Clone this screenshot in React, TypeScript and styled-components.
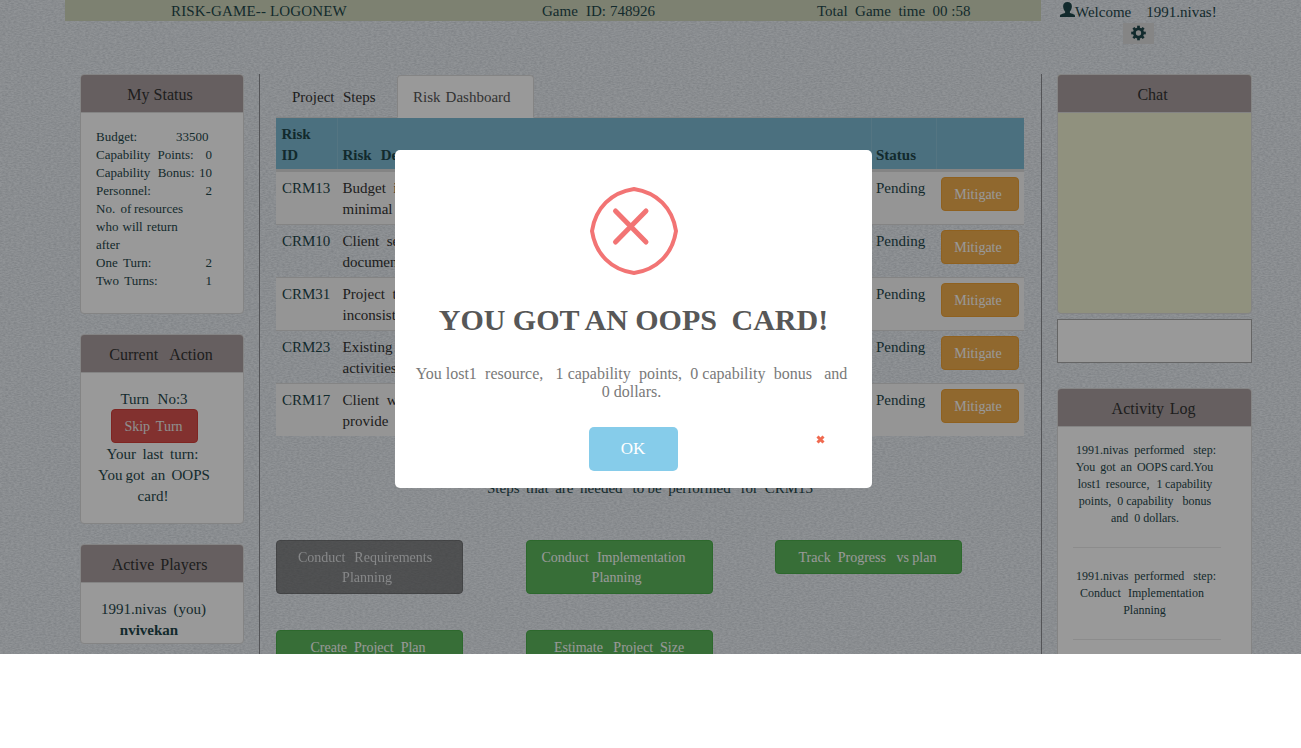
import React from "react";
import styled, { createGlobalStyle, css } from "styled-components";

const Global = createGlobalStyle`
  *, *::before, *::after { box-sizing: border-box; }
  body {
    margin: 0;
    background: #fff;
    font-family: "Liberation Serif", "Times New Roman", serif;
    font-size: 15px;
    line-height: 21px;
    color: #1f474b;
    overflow: hidden;
  }
`;

const Page = styled.div`
  position: relative;
  width: 1301px;
  height: 654px;
  overflow: hidden;
  background: #f0f5fa;
`;

const Linen = styled.svg`
  position: absolute;
  inset: 0;
  width: 100%;
  height: 100%;
`;

const Content = styled.div`
  position: relative;
  padding-left: 65px;
`;

/* One line of text whose spaces are kept; ws and ls tune its spacing. */
const Line = styled.div<{ $ws?: number; $ls?: number; $pl?: number; $pr?: number; $b?: boolean }>`
  white-space: pre;
  word-spacing: ${(p) => p.$ws ?? 0}px;
  letter-spacing: ${(p) => p.$ls ?? 0}px;
  padding-left: ${(p) => p.$pl ?? 0}px;
  padding-right: ${(p) => p.$pr ?? 0}px;
  font-weight: ${(p) => (p.$b ? 700 : 400)};
`;

const Header = styled.header`
  display: flex;
  height: 74px;
`;

const TopBar = styled.div`
  display: grid;
  grid-template-columns: 391px 361px 224px;
  width: 976px;
  height: 21px;
  padding-top: 1px;
  background: #d0d8bc;
`;

const UserBox = styled.div`
  width: 196px;
  padding: 2px 0 0 19px;
`;

const Welcome = styled.div`
  display: flex;
  height: 21px;
  svg { flex: none; }
`;

const GearButton = styled.button`
  display: flex;
  justify-content: center;
  width: 31px;
  height: 21px;
  margin-left: 63px;
  padding: 2px 0 0;
  border: 0;
  background: #dedede;
  color: #1f474b;
`;

const Columns = styled.div`
  display: grid;
  grid-template-columns: 195px 782px 210px;
  height: 640px;
`;

const LeftCol = styled.aside`
  padding: 0 15px;
  border-right: 1px solid #8b8d91;
`;

const MainCol = styled.main`
  padding: 1px 17px 0 16px;
  border-right: 1px solid #8b8d91;
`;

const RightCol = styled.aside`
  padding-left: 15px;
`;

const Panel = styled.section<{ $h: number; $mb?: number; $fill?: string }>`
  height: ${(p) => p.$h}px;
  margin-bottom: ${(p) => p.$mb ?? 20}px;
  border: 1px solid #dcdcdc;
  border-radius: 4px;
  background: ${(p) => p.$fill ?? "#fff"};
  overflow: hidden;
`;

const PanelHead = styled.h3<{ $shift?: number }>`
  display: flex;
  justify-content: center;
  height: 38px;
  margin: 0;
  padding: 9px ${(p) => p.$shift ?? 0}px 0 0;
  border-bottom: 1px solid #ddd;
  background: #aa9fa0;
  color: #333;
  font-size: 16px;
  font-weight: 400;
  line-height: 22px;
`;

const PanelBody = styled.div<{ $pt?: number }>`
  display: flex;
  flex-direction: column;
  align-items: center;
  padding: ${(p) => p.$pt ?? 15}px 31px 0 15px;
`;

const Stats = styled.div`
  width: 116px;
  font-size: 13px;
  line-height: 18px;
`;

const Stat = styled.div<{ $r?: number }>`
  display: flex;
  justify-content: space-between;
  padding-right: ${(p) => p.$r ?? 0}px;
`;

const Button = styled.button<{ $kind: "danger" | "warning" | "success" | "muted"; $w: number; $h?: number }>`
  display: flex;
  flex-direction: column;
  align-items: center;
  width: ${(p) => p.$w}px;
  height: ${(p) => p.$h ?? 34}px;
  padding: 7px 4px 0 0;
  border: 1px solid;
  border-radius: 4px;
  color: #fff;
  font: 14px/20px "Liberation Serif", serif;
  ${(p) =>
    ({
      danger: css`background: #d9534f; border-color: #d43f3a; color: #eee; margin: -1px 0 1px 1px; padding-right: 2px;`,
      warning: css`background: #f0ad4e; border-color: #eea236;`,
      success: css`background: #5cb85c; border-color: #4cae4c; padding-right: 3px;`,
      muted: css`background: #505050; border-color: #333; opacity: 0.65; color: #ddd; padding-right: 3px;`,
    })[p.$kind]}
`;

const Tabs = styled.nav`
  display: flex;
  height: 43px;
  border-bottom: 1px solid #ddd;
`;

const Tab = styled.div<{ $w: number; $active?: boolean }>`
  width: ${(p) => p.$w}px;
  height: 43px;
  padding: 11px 0 0 15px;
  border: 1px solid transparent;
  border-radius: 4px 4px 0 0;
  color: #333;
  ${(p) => p.$active && css`background: #fff; border-color: #ddd #ddd #fff; color: #555;`}
`;

const rowGrid = css`
  display: grid;
  grid-template-columns: 62px 534px 65px 87px;
`;

const HeadRow = styled.div`
  ${rowGrid}
  height: 53px;
  background: #7dbbd4;
  border-bottom: 2px solid #ddd;
  font-weight: 700;
`;

const HeadCell = styled.div<{ $last?: boolean; $pl?: number }>`
  display: flex;
  flex-direction: column;
  justify-content: flex-end;
  padding: 0 5px 3px ${(p) => p.$pl ?? 4.5}px;
  border-right: ${(p) => (p.$last ? 0 : 1)}px solid #8cc3d9;
`;

const Row = styled.div<{ $odd: boolean }>`
  ${rowGrid}
  height: 53px;
  border-top: 1px solid #ddd;
  background: ${(p) => (p.$odd ? "#f9f9f9" : "transparent")};
`;

const Cell = styled.div<{ $dark?: boolean; $pl: number }>`
  padding: 6px 0 0 ${(p) => p.$pl}px;
  color: ${(p) => (p.$dark ? "#333" : "inherit")};
`;

const ActionCell = styled.div`
  padding: 5px 4px 0;
`;

const StepsTitle = styled.div`
  display: flex;
  height: 104px;
  padding: 42px 0 0 211px;
`;

const StepGrid = styled.div`
  display: grid;
  grid-template-columns: 187px 187px 187px;
  grid-auto-rows: 54px;
  column-gap: 62.5px;
  row-gap: 36px;
`;

const ChatInput = styled.textarea`
  display: block;
  width: 195px;
  height: 44px;
  margin: -15px 0 25px;
  border: 1px solid #a9a9a9;
  background: #fff;
  resize: none;
`;

const Log = styled.div`
  display: flex;
  flex-direction: column;
  align-items: center;
  font-size: 12px;
  line-height: 17px;
`;

const Rule = styled.hr`
  width: 148px;
  height: 1px;
  margin: 20px 0;
  border: 0;
  background: #e9e9e9;
`;

const Overlay = styled.div`
  position: absolute;
  inset: 0;
  background: rgba(0, 0, 0, 0.4);
`;

const Modal = styled.div`
  position: absolute;
  left: 395px;
  top: 150px;
  display: flex;
  flex-direction: column;
  align-items: center;
  width: 477px;
  height: 338px;
  padding-top: 37px;
  border-radius: 5px;
  background: #fff;
`;

const Title = styled.h2`
  margin: 25px 0 25px;
  color: #575757;
  font-size: 30px;
  line-height: 40px;
`;

const Message = styled.div`
  display: flex;
  flex-direction: column;
  align-items: center;
  height: 62px;
  padding-right: 4px;
  color: #797979;
  font-size: 16px;
  line-height: 18px;
`;

const Ok = styled.button`
  width: 89px;
  height: 44px;
  padding: 0 1px 0 0;
  border: 0;
  border-radius: 5px;
  background: #86ccea;
  color: #fff;
  font: 17px/20px "Liberation Serif", serif;
`;

const Cross = styled.svg`
  position: absolute;
  left: 421px;
  top: 285px;
`;

const UserIcon = () => (
  <svg width="15" height="16" viewBox="0 0 15 16">
    <path
      fill="currentColor"
      d="M7.500 0C10.300 0 11.900 1.600 11.900 4.300c0 2.200-.9 4-2 5.200v1.300c0 .7 5.100 1.200 5.100 2.900V15H0v-1.300c0-1.700 5.100-2.200 5.100-2.900V9.500C4 8.300 3.100 6.500 3.100 4.300 3.100 1.600 4.700 0 7.500 0z"
    />
  </svg>
);

const GearIcon = () => (
  <svg width="16" height="16" viewBox="-7.500 -8 16 16" fill="none" stroke="currentColor">
    <circle r="4.100" strokeWidth="2.900" />
    {[0, 45, 90, 135, 180, 225, 270, 315].map((a) => (
      <path key={a} d="M0-4.800V-7.300" strokeWidth="2.700" transform={`rotate(${a})`} />
    ))}
  </svg>
);

const ErrorIcon = () => (
  <svg width="88" height="88" viewBox="-44 -44 88 88" fill="none" stroke="#f27474">
    <path
      strokeWidth="4"
      d="M0-42C23-38.500 38.500-23 42 0C38.500 23 23 38.500 0 42C-23 38.500-38.500 23-42 0C-38.500-23-23-38.500 0-42z"
    />
    <path strokeWidth="5" strokeLinecap="round" d="M-18.500-20L12 11M12-20L-18.500 11" />
  </svg>
);

const risks = [
  ["CRM13", "Budget  is", "minimal"],
  ["CRM10", "Client  seeks", "documentation"],
  ["CRM31", "Project  team", "inconsistent"],
  ["CRM23", "Existing", "activities"],
  ["CRM17", "Client  will", "provide"],
];

export default function App() {
  return (
    <Page>
      <Global />
      <Linen>
        <filter id="weave" x="0" y="0" width="100%" height="100%">
          <feTurbulence type="fractalNoise" baseFrequency="0.35 0.85" numOctaves="2" seed="4" />
          <feColorMatrix values="0 0 0 0 0.25  0 0 0 0 0.28  0 0 0 0 0.32  0.48 0 0 0 -0.14" />
        </filter>
        <rect width="1301" height="654" filter="url(#weave)" />
      </Linen>
      <Content>
        <Header>
          <TopBar>
            <Line $pl={106} $ls={0.16}>RISK-GAME-- LOGONEW</Line>
            <Line $pl={86} $ws={0.3}>Game  ID: 748926</Line>
            <Line>Total  Game  time  00 :58</Line>
          </TopBar>
          <UserBox>
            <Welcome>
              <UserIcon />
              <Line>{"Welcome    1991.nivas!"}</Line>
            </Welcome>
            <GearButton><GearIcon /></GearButton>
          </UserBox>
        </Header>
        <Columns>
          <LeftCol>
            <Panel $h={240}>
              <PanelHead $shift={4}><Line>My Status</Line></PanelHead>
              <PanelBody>
                <Stats>
                  <Stat $r={3.5}><Line>Budget:</Line><Line>33500</Line></Stat>
                  <Stat><Line $ws={0.4}>Capability  Points:</Line><Line>0</Line></Stat>
                  <Stat><Line $ws={0.5}>Capability  Bonus:</Line><Line>10</Line></Stat>
                  <Stat><Line>Personnel:</Line><Line>2</Line></Stat>
                  <Line $ws={-0.6}>No.  of resources</Line>
                  <Line $ws={-1.2}>who  will  return</Line>
                  <Line>after</Line>
                  <Stat><Line $ws={-0.5}>One  Turn:</Line><Line>2</Line></Stat>
                  <Stat><Line $ws={-0.5}>Two  Turns:</Line><Line $pl={1}>1</Line></Stat>
                </Stats>
              </PanelBody>
            </Panel>
            <Panel $h={190}>
              <PanelHead $shift={2}><Line>Current   Action</Line></PanelHead>
              <PanelBody $pt={16}>
                <Line $ws={0.5}>Turn  No:3</Line>
                <Button $kind="danger" $w={87}><Line $ws={-0.5}>Skip  Turn</Line></Button>
                <Line $ws={-0.4} $pr={3}>Your  last  turn:</Line>
                <Line $ws={-0.6}>You got  an  OOPS</Line>
                <Line $pr={2}>card!</Line>
              </PanelBody>
            </Panel>
            <Panel $h={100}>
              <PanelHead $shift={5}><Line $ws={-1}>Active  Players</Line></PanelHead>
              <PanelBody $pt={16}>
                <Line $ws={-0.3} $pr={1}>1991.nivas  (you)</Line>
                <Line $b $pr={10}>nvivekan</Line>
              </PanelBody>
            </Panel>
          </LeftCol>
          <MainCol>
            <Tabs>
              <Tab $w={121}><Line $ws={0.5}>Project  Steps</Line></Tab>
              <Tab $w={137} $active><Line $ws={-1.2}>Risk  Dashboard</Line></Tab>
            </Tabs>
            <HeadRow>
              <HeadCell $pl={5.5}><Line $b>Risk</Line><Line $b>ID</Line></HeadCell>
              <HeadCell><Line $b $ws={0.8}>Risk  De</Line></HeadCell>
              <HeadCell $pl={4}><Line $b>Status</Line></HeadCell>
              <HeadCell $last />
            </HeadRow>
            {risks.map(([id, a, b], i) => (
              <Row key={id} $odd={i % 2 === 0}>
                <Cell $pl={6}><Line>{id}</Line></Cell>
                <Cell $pl={4.5} $dark><Line>{a}</Line><Line>{b}</Line></Cell>
                <Cell $pl={4}><Line>Pending</Line></Cell>
                <ActionCell><Button $kind="warning" $w={78}><Line>Mitigate</Line></Button></ActionCell>
              </Row>
            ))}
            <StepsTitle>
              <Line $ws={-0.45}>{"Steps  that  are  needed   to be  performed   for  CRM13"}</Line>
            </StepsTitle>
            <StepGrid>
              <Button $kind="muted" $w={187} $h={54}><Line $ws={1} $pr={6}>Conduct  Requirements</Line><Line $pr={2}>Planning</Line></Button>
              <Button $kind="success" $w={187} $h={54}><Line $ws={0.5} $pr={8}>Conduct  Implementation</Line><Line $pr={2}>Planning</Line></Button>
              <Button $kind="success" $w={187}><Line $pl={1}>Track  Progress   vs plan</Line></Button>
              <Button $kind="success" $w={187}><Line>Create  Project  Plan</Line></Button>
              <Button $kind="success" $w={187}><Line $pl={3}>Estimate   Project  Size</Line></Button>
            </StepGrid>
          </MainCol>
          <RightCol>
            <Panel $h={240} $fill="#f0f2d3">
              <PanelHead $shift={4}><Line>Chat</Line></PanelHead>
            </Panel>
            <ChatInput />
            <Panel $h={300}>
              <PanelHead $shift={2}><Line $ws={-1.2}>Activity  Log</Line></PanelHead>
              <PanelBody>
                <Log>
                  <Line $pr={1}>1991.nivas  performed   step:</Line>
                  <Line $ws={-0.5} $pr={4}>You  got  an  OOPS card.You</Line>
                  <Line $ws={-0.6} $pr={3}>lost1  resource,   1 capability</Line>
                  <Line $pr={3}>points,  0 capability   bonus</Line>
                  <Line $pr={3}>and  0 dollars.</Line>
                </Log>
                <Rule />
                <Log>
                  <Line $pr={1}>1991.nivas  performed   step:</Line>
                  <Line $ws={-0.6} $pr={9}>Conduct   Implementation</Line>
                  <Line $pr={4}>Planning</Line>
                </Log>
                <Rule />
              </PanelBody>
            </Panel>
          </RightCol>
        </Columns>
      </Content>
      <Overlay />
      <Modal>
        <ErrorIcon />
        <Title><Line $b $ws={-0.2}>YOU GOT AN OOPS  CARD!</Line></Title>
        <Message>
          <Line $ws={0.1}>{"You lost1  resource,   1 capability  points,  0 capability  bonus   and"}</Line>
          <Line>0 dollars.</Line>
        </Message>
        <Ok>OK</Ok>
        <Cross width="9" height="9" viewBox="0 0 9 9">
          <path d="M1.500 1.500L7.500 7.500M7.500 1.500L1.500 7.500" stroke="#f06a50" strokeWidth="3" />
        </Cross>
      </Modal>
    </Page>
  );
}
